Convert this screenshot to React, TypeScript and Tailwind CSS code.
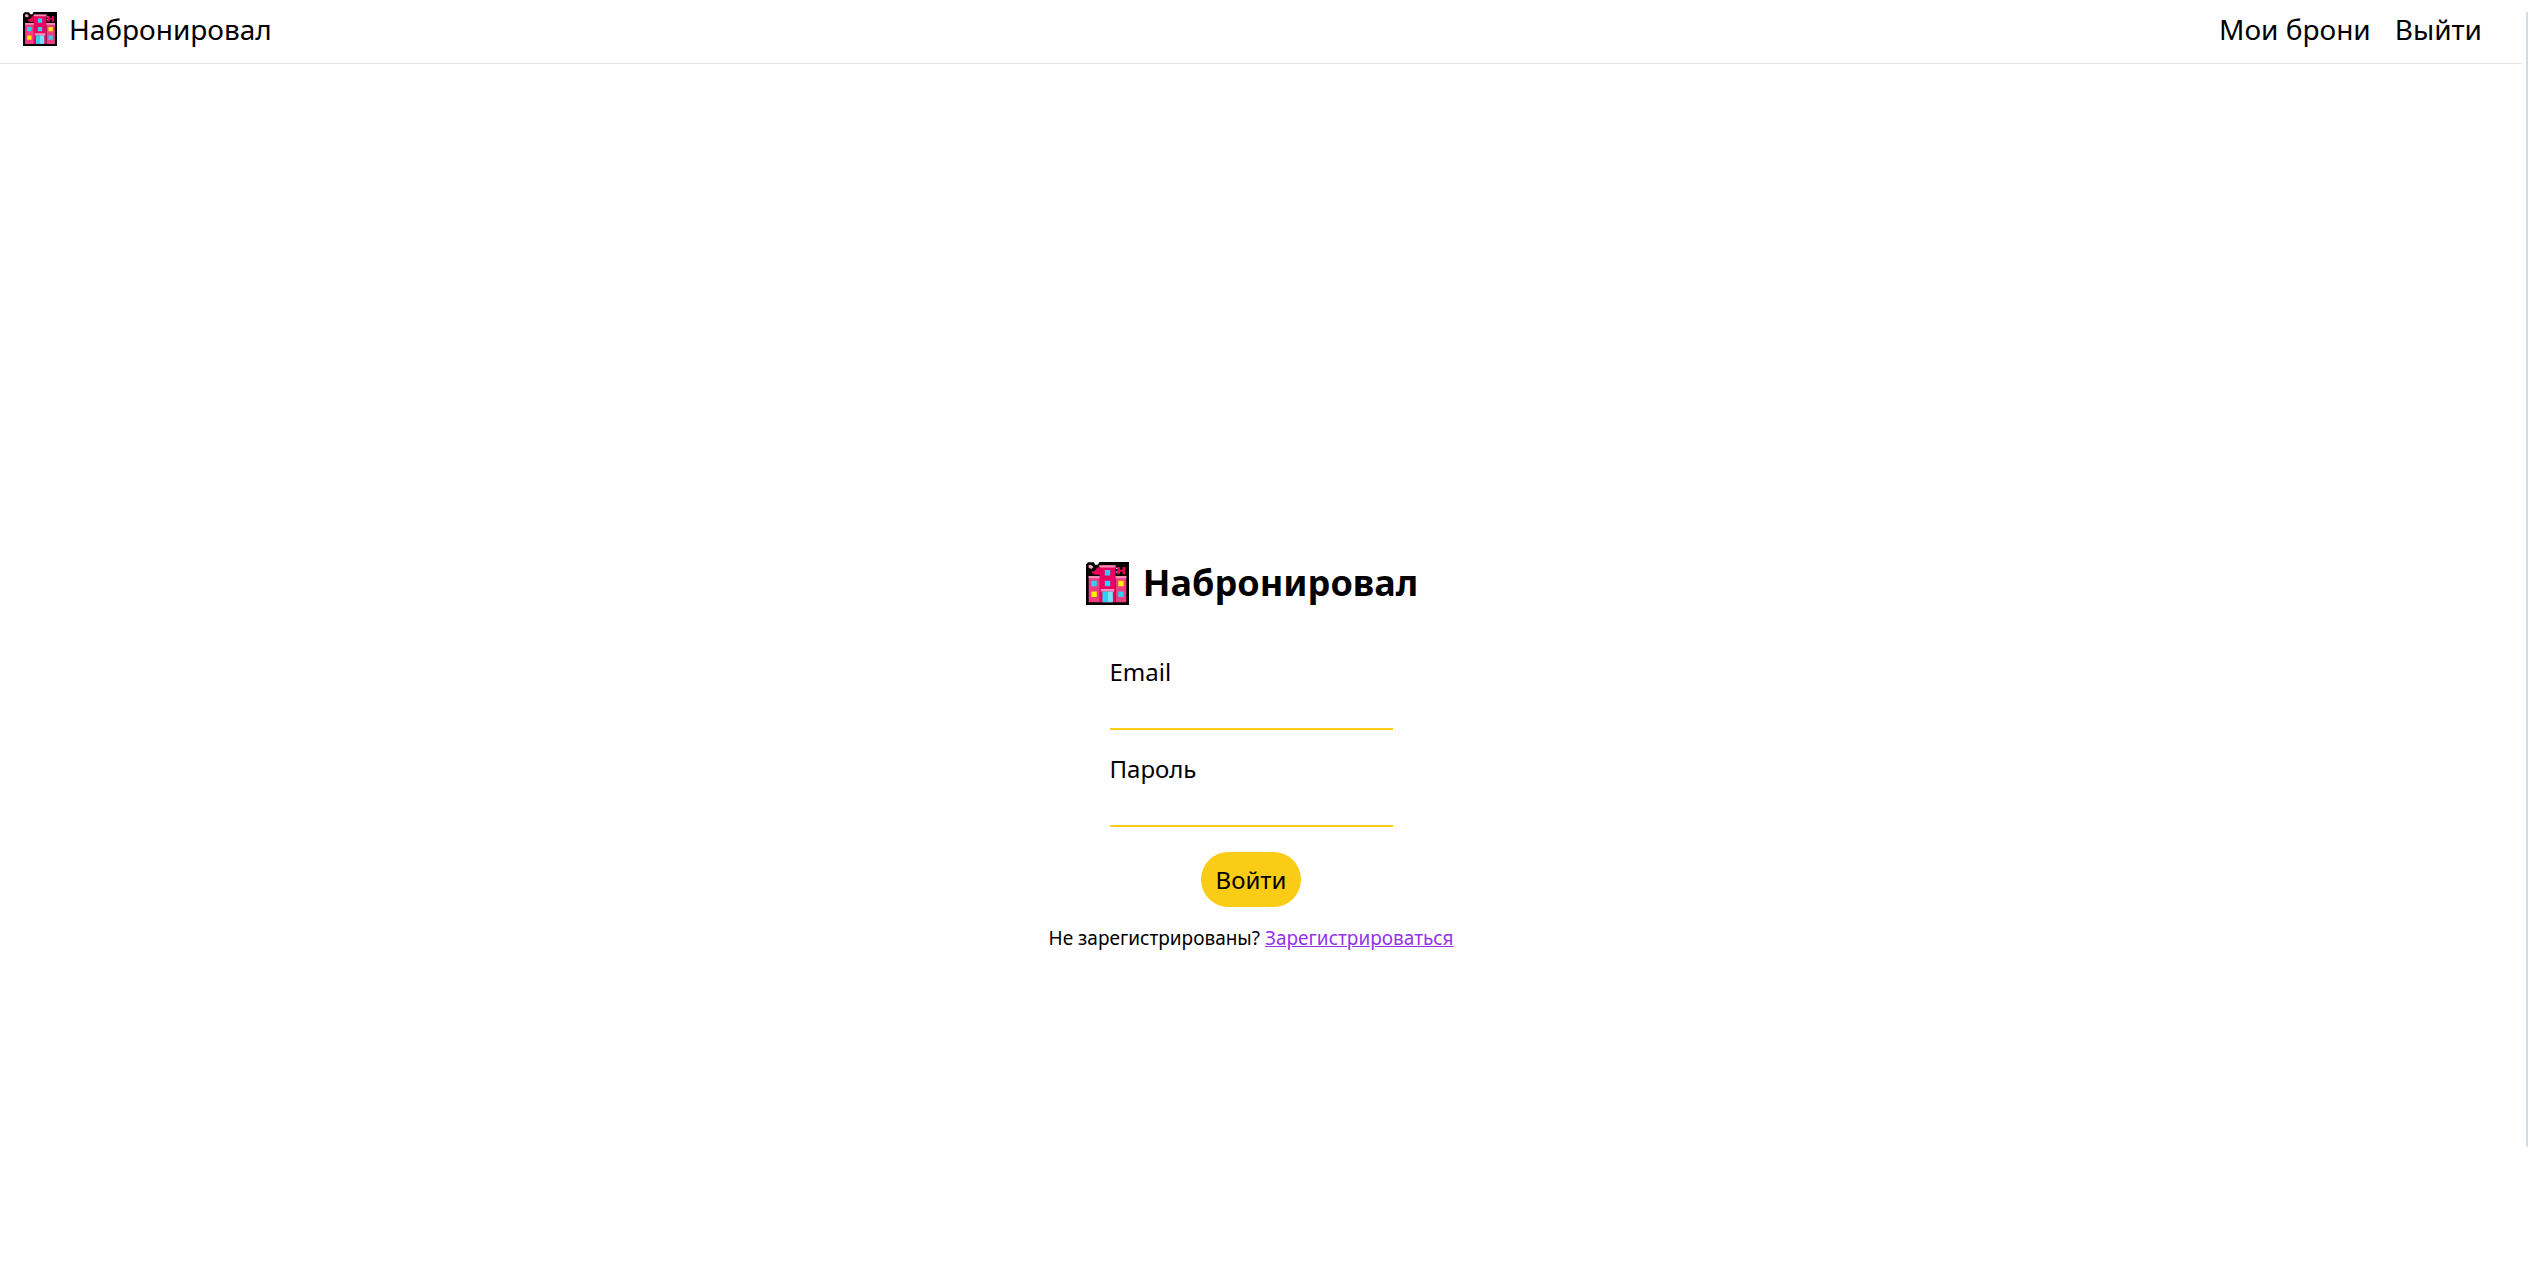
function HotelIcon({ className }: { className: string }) {
  return (
    <svg viewBox="0 0 16 16" className={className} aria-hidden="true">
      <path d="M0 .9.8.1h2.1l.5.9h1L5 0h11v16H0z" fill="#000" />
      <path d="M1 1.1h.9l.9.8-.7.7-1.1-.5z" fill="#f9a8c9" />
      <path d="M2.1 3.4h1.1L4.2 2H5v2.7H3.2L2.1 3.9z" fill="#e8005c" />
      <path d="M11.6 1.9h1v1h1v-1h1v2.7h-1v-1h-1v1h-1z" fill="#e8005c" />
      <path d="M11.1 2.1h.6v.4h-.6zM11.1 3.5h.6v.4h-.6z" fill="#fff" />
      <path d="M1 5.2h4.2V15H1zM11 5.2h4V15h-4z" fill="#f03c82" />
      <path d="M5 1.2h6V15H5z" fill="#ea0060" />
      <path d="M5 1.2h6V2H5zM1 5.2h4V6H1zM11 5.2h4V6h-4zM5.5 10h5v1h-5z" fill="#f48fb8" />
      <path d="M7 3h2v2H7zM7 7h2v2H7zM2 7h2v2H2zM12 11h2v2h-2z" fill="#2fd0f8" />
      <path d="M12 7h2v2h-2zM2 11h2v2H2z" fill="#fff000" />
      <path d="M6.1 11H8v4H6.1z" fill="#30cdf6" />
      <path d="M8 11h2v4H8z" fill="#74e5ff" />
    </svg>
  );
}

function Field({ id, label, type }: { id: string; label: string; type: string }) {
  return (
    <div className="flex flex-col">
      <label htmlFor={id} className="text-2xl leading-8">
        {label}
      </label>
      <input
        id={id}
        type={type}
        className="h-[42px] w-[283px] border-b-2 border-[#facc15] bg-transparent text-2xl outline-none"
      />
    </div>
  );
}

export default function App() {
  return (
    <div className="flex min-h-screen items-start bg-white font-['Noto_Sans','Open_Sans',sans-serif] text-black">
      <div className="flex min-w-0 flex-1 flex-col">
        <header className="mr-1 flex h-16 items-center justify-between border-b border-gray-200 pr-10 pl-[23px] text-[28px] leading-10">
          <a href="#home" className="flex items-center gap-3 pb-[5px]">
            <HotelIcon className="size-[34px]" />
            <span>Набронировал</span>
          </a>
          <nav className="flex gap-6 pb-[5px]">
            <a href="#bookings">Мои брони</a>
            <button type="button">Выйти</button>
          </nav>
        </header>
        <main className="flex flex-col items-center pt-[492px] pr-6">
          <h1 className="flex items-center gap-[14px] pl-0.5 text-4xl leading-[54px] font-bold">
            <HotelIcon className="size-[43px]" />
            <span>Набронировал</span>
          </h1>
          <form className="mt-[46px] flex flex-col items-center gap-[23px]">
            <Field id="email" label="Email" type="email" />
            <Field id="password" label="Пароль" type="password" />
            <button type="submit" className="mt-0.5 h-[55px] rounded-full bg-[#facc15] px-[15px] text-2xl">
              Войти
            </button>
          </form>
          <p className="mt-[15px] text-[19px] leading-8">
            Не зарегистрированы?{" "}
            <a href="#register" className="text-[#9333ea] underline">
              Зарегистрироваться
            </a>
          </p>
        </main>
      </div>
      <div className="mt-3 h-[1135px] w-0.5 rounded-full bg-[#cfdce7]" />
    </div>
  );
}
